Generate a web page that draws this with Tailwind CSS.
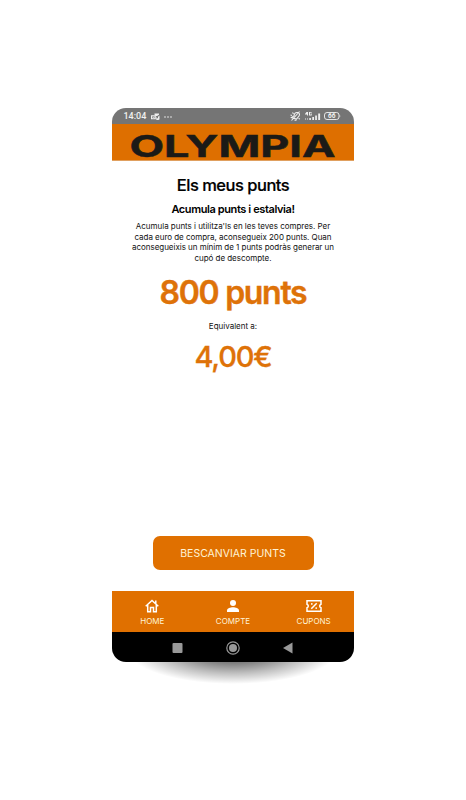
<!DOCTYPE html>
<html lang="ca">
<head>
  <meta charset="UTF-8">
  <meta name="viewport" content="width=device-width, initial-scale=1.0">
  <title>Olympia - Els meus punts</title>
  <!-- Tailwind CSS -->
  <script src="https://cdn.jsdelivr.net/npm/@tailwindcss/browser@4"></script>
</head>
<body class="bg-white h-[800px] overflow-hidden font-['Inter','Liberation_Sans',sans-serif]">

<div class="relative w-[242px] ml-[112px] pt-[108px]">
  <!-- Floor shadow -->
  <div class="absolute left-[16px] top-[616px] w-[210px] h-[68px] rounded-[50%] bg-[radial-gradient(closest-side,#000000cc,#00000088_35%,#00000040_68%,transparent)]"></div>

  <!-- Phone screen -->
  <div class="relative flex flex-col h-[554px] rounded-[14px] overflow-hidden bg-white">

    <!-- Status bar -->
    <div class="flex items-center h-4 shrink-0 bg-[#757575] pl-[11.500px] pr-[13px] pt-px text-[#f0f0f0]">
      <span class="font-[Roboto] text-[9px] leading-none font-medium w-[27px]">14:04</span>
      <svg class="w-[9px] h-[8px]" viewBox="0 0 9 8" fill="currentColor">
        <path d="M3.500.5h4.500v1.200L5.700 3.200 3.500 1.700zM8.500 2.500v4H7V3.700zM0 2.200h4.800v4H0z"/>
        <path d="M1.300 3.200h2.200v2H1.300z" fill="#757575"/>
        <path d="M2 3.800h.9v.9H2zM5.300 4L8.300 7H5.300z"/>
      </svg>
      <svg class="w-[8px] h-[2px] ml-1" viewBox="0 0 8 2" fill="currentColor">
        <circle cx="1" cy="1" r=".8"/><circle cx="4" cy="1" r=".8"/><circle cx="7" cy="1" r=".8"/>
      </svg>
      <svg class="w-[11px] h-[10px] ml-auto -mt-px" viewBox="0 0 11 10" fill="none" stroke="currentColor" stroke-width="1.100">
        <path d="M1.500 6.500L4 5Q4.500 1 7.500 1.500T9 5L6.500 8zM1.500 9.500L9.500.5M.5 4l1.500 .5M8.500 7.500l1.500.5M2.500 1.500l1 1.500M4.500 9.200h2"/>
      </svg>
      <svg class="w-[16px] h-[9px] ml-[4px] -mt-px" viewBox="0 0 16 9" fill="currentColor">
        <path d="M2 0h1v3.600H2V2.600H0V2L1.500 0zM4 0h2.700v.8H5v1.900h.7V1.500h1v2.100H4zM0 6.500h1v1H0zM2 6.500h1v1H2zM4.300 6h1.600v2H4.300zM7.300 5h1.700v3H7.300zM10.200 3.500h1.700V8h-1.700zM13.200 1.500h1.900V8h-1.900z"/>
      </svg>
      <svg class="w-[17px] h-[8px] ml-[3px] -mt-px" viewBox="0 0 17 8">
        <rect x=".5" y=".5" width="14.500" height="7" rx="2.500" fill="none" stroke="currentColor" stroke-width=".9"/>
        <path d="M15.700 2.500q1.300 1.500 0 3z" fill="currentColor"/>
        <text x="7.700" y="6.300" text-anchor="middle" fill="currentColor" font-family="Roboto" font-size="6.500" font-weight="700">66</text>
      </svg>
    </div>

    <!-- Brand header -->
    <header class="h-[37px] shrink-0 bg-[#de6f00] border-b border-[#e0a060]">
      <svg class="block w-full h-[42px] overflow-visible" viewBox="0 0 242 42">
        <text x="17.500" y="33" textLength="206" lengthAdjust="spacingAndGlyphs" font-family="Inter" font-size="30" font-weight="700" fill="#1b1a17" stroke="#1b1a17" stroke-width=".5">OLYMPIA</text>
      </svg>
    </header>

    <!-- Points -->
    <main class="flex flex-col items-center flex-1 text-center text-[#111]">
      <h1 class="mt-[14px] text-[16.5px] leading-5 font-medium tracking-[-0.5px] text-black [-webkit-text-stroke:0.2px_black]">Els meus punts</h1>
      <h2 class="mt-[7px] text-[11px] leading-[14px] font-semibold tracking-[-0.4px] text-black">Acumula punts i estalvia!</h2>
      <p class="mt-[5px] text-[8px] leading-[10.500px] tracking-[-0.03px] whitespace-nowrap">
        Acumula punts i utilitza'ls en les teves compres. Per<br>
        cada euro de compra, aconsegueix 200 punts. Quan<br>
        aconsegueixis un mínim de 1 punts podràs generar un<br>
        cupó de descompte.
      </p>
      <p class="mt-[10px] text-[32px] leading-[40px] font-semibold tracking-[-1.300px] text-[#de7208] [-webkit-text-stroke:0.4px_#de7208]">800 punts</p>
      <p class="mt-[8px] text-[8px] leading-[10px]">Equivalent a:</p>
      <p class="mt-[8px] text-[29px] leading-[36px] font-medium tracking-[-1.200px] text-[#de7208] [-webkit-text-stroke:0.3px_#de7208]">4,00€</p>
      <button class="mt-auto mb-[21px] pt-[1px] w-[161px] h-[34px] rounded-[7px] bg-[#e07000] text-[#fff3d6] text-[10.500px]">BESCANVIAR PUNTS</button>
    </main>

    <!-- Tab bar -->
    <nav class="grid grid-cols-3 h-[41px] shrink-0 bg-[#e07000] text-[#fff3d6] text-[8px] leading-[10px]">
      <a href="#" class="flex flex-col items-center pt-[8px]">
        <svg class="w-[14px] h-[14px]" viewBox="0 0 14 14" fill="none" stroke="#fff" stroke-width="1.500">
          <path d="M.7 7.300L7 1.500l6.300 5.800M2.700 6v6.800h2.800V8.500h3v4.300h2.800V6M10.800 1.500v3"/>
        </svg>
        <span class="mt-[3px]">HOME</span>
      </a>
      <a href="#" class="flex flex-col items-center pt-[8px]">
        <svg class="w-[14px] h-[14px]" viewBox="0 0 14 14" fill="#fff">
          <circle cx="7" cy="4" r="3"/>
          <path d="M1 13v-1.500C1 9.300 4.500 8.200 7 8.200s6 1.100 6 3.300V13z"/>
        </svg>
        <span class="mt-[3px]">COMPTE</span>
      </a>
      <a href="#" class="flex flex-col items-center pt-[8px]">
        <svg class="w-[16px] h-[14px]" viewBox="0 0 16 14" fill="none" stroke="#fff" stroke-width="1.500">
          <path d="M1 1.800h14v3.400a1.900 1.900 0 0 0 0 3.600v3.400H1V8.800a1.900 1.900 0 0 0 0-3.600z"/>
          <path d="M5.300 9.700l5.400-5.400"/>
          <circle cx="5.800" cy="4.900" r=".9" fill="#fff" stroke="none"/><circle cx="10.200" cy="9.100" r=".9" fill="#fff" stroke="none"/>
        </svg>
        <span class="mt-[3px]">CUPONS</span>
      </a>
    </nav>

    <!-- Android buttons -->
    <div class="flex items-center justify-between h-[30px] shrink-0 bg-black pl-[60px] pr-[61px] pt-[2px]">
      <svg class="w-[11px] h-[10px]" viewBox="0 0 11 10"><rect x=".5" width="10" height="10" rx="1" fill="#999"/></svg>
      <svg class="w-[14px] h-[14px]" viewBox="0 0 14 14">
        <circle cx="7" cy="7" r="6.200" fill="none" stroke="#999" stroke-width="1.200"/>
        <circle cx="7" cy="7" r="4" fill="#999"/>
      </svg>
      <svg class="w-[10px] h-[12px]" viewBox="0 0 10 12"><path d="M0 6L9.500.5v11z" fill="#999"/></svg>
    </div>
  </div>
</div>

</body>
</html>
